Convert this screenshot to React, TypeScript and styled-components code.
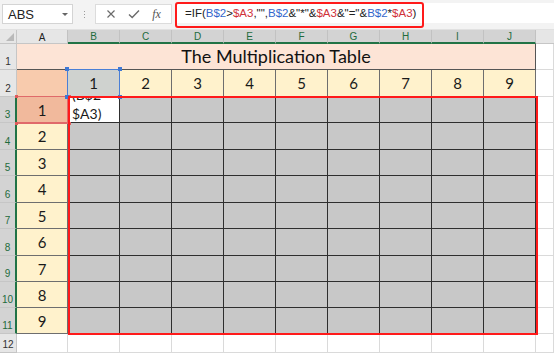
import React from "react";
import styled, { createGlobalStyle } from "styled-components";

const GlobalStyle = createGlobalStyle`
    html, body{
        margin: 0;
        padding: 0;
        background: #ffffff;
    }
    body{
        font-family: "Liberation Sans", Arial, sans-serif;
    }
`;

const Page = styled.div`
    width: 554px;
    height: 353px;
    overflow: hidden;
    background: #ffffff;
`;

/* TOOLBAR ---------------------------------------------------------------------------------- */
const Toolbar = styled.div`
    height: 30px;
    box-sizing: border-box;
    background: #f3f3f3;
    border-bottom: 1px solid #e1e1e1;
    display: flex;
    align-items: flex-start;
    padding: 3px 0 0 2px;
`;

const NameBox = styled.div`
    width: 71px;
    height: 20px;
    box-sizing: border-box;
    background: #fff;
    border: 1px solid #d4d4d4;
    display: flex;
    align-items: center;
    justify-content: space-between;
    padding: 0 4px 0 5px;
    font-size: 13px;
    color: #222;
    margin-top: 1px;
`;

const Caret = styled.span`
    width: 0;
    height: 0;
    border-left: 3px solid transparent;
    border-right: 3px solid transparent;
    border-top: 3px solid #666;
`;

const Grip = styled.div`
    width: 22px;
    height: 20px;
    display: flex;
    flex-direction: column;
    align-items: center;
    justify-content: center;
    gap: 2px;
    margin-top: 1px;
    span{
        width: 1px;
        height: 1px;
        background: #9a9a9a;
    }
`;

const IconBox = styled.div`
    width: 77px;
    height: 20px;
    box-sizing: border-box;
    background: #fff;
    border: 1px solid #dcdcdc;
    display: flex;
    align-items: center;
    justify-content: space-around;
    padding: 0 4px;
    margin-top: 1px;
    color: #6a6a6a;
`;

const Fx = styled.span`
    font-family: "Liberation Serif", serif;
    font-style: italic;
    font-size: 12px;
    color: #555;
`;

const FormulaBox = styled.div`
    flex: 1;
    height: 20px;
    margin-left: 4px;
    background: #fff;
    position: relative;
    display: flex;
    align-items: center;
    padding-left: 9px;
    font-size: 11.5px;
    color: #222;
    white-space: nowrap;
`;

const FormulaOutline = styled.div`
    position: absolute;
    left: -1px;
    top: -1px;
    width: 249px;
    height: 26px;
    box-sizing: border-box;
    border: 2px solid #ff1a1a;
    border-radius: 3px;
`;

const Ref = styled.span<{ $kind: "a" | "b" }>`
    color: ${p => (p.$kind === "a" ? "#3366cc" : "#d0323a")};
`;

/* SHEET ------------------------------------------------------------------------------------ */
const Sheet = styled.div`
    position: relative;
    display: grid;
    grid-template-columns: 17px 51px repeat(9, 52px) 1fr;
    grid-template-rows: 14px 26px 27px 26px 27px 26px 27px 26px 27px 26px 26px 26px 1fr;
    height: 323px;
`;

const Corner = styled.div`
    background: #e6e6e6;
    border-right: 1px solid #c6c6c6;
    border-bottom: 1px solid #c6c6c6;
    box-sizing: border-box;
    position: relative;
    &::after{
        content: "";
        position: absolute;
        right: 2px;
        bottom: 2px;
        border-left: 8px solid transparent;
        border-bottom: 8px solid #b9b9b9;
    }
`;

const ColHead = styled.div<{ $sel?: boolean; $edge?: boolean }>`
    box-sizing: border-box;
    background: ${p => (p.$sel ? "#d3d3d3" : "#e6e6e6")};
    color: ${p => (p.$sel ? "#1e6b3c" : "#222")};
    border-right: ${p => (p.$edge ? "none" : "1px solid #c2c2c2")};
    border-bottom: ${p => (p.$sel ? "2px solid #217346" : "1px solid #c6c6c6")};
    font-size: 10px;
    display: flex;
    align-items: center;
    justify-content: center;
    padding-top: 1px;
`;

const RowHead = styled.div<{ $sel?: boolean }>`
    box-sizing: border-box;
    background: ${p => (p.$sel ? "#d3d3d3" : "#e6e6e6")};
    color: ${p => (p.$sel ? "#1e6b3c" : "#333")};
    border-bottom: 1px solid #c6c6c6;
    border-right: ${p => (p.$sel ? "2px solid #217346" : "1px solid #c6c6c6")};
    font-size: 10px;
    display: flex;
    align-items: flex-end;
    justify-content: center;
    padding-bottom: 2px;
`;

const Title = styled.div`
    grid-column: 2 / span 10;
    box-sizing: border-box;
    background: #fde4d6;
    border-right: 1px solid #555;
    border-bottom: 1px solid #555;
    font-family: Lato, "Liberation Sans", sans-serif;
    font-size: 18px;
    color: #111;
    display: flex;
    align-items: flex-end;
    justify-content: center;
    padding-bottom: 2px;
`;

type Tone = "peach" | "salmon" | "yellow" | "picked" | "gray" | "white" | "blank";

const tones: Record<Tone, { bg: string; line: string }> = {
    peach: { bg: "#f8cbad", line: "#8c8c8c" },
    salmon: { bg: "#f1b99c", line: "#e06a6a" },
    yellow: { bg: "#fff2cc", line: "#6e6e6e" },
    picked: { bg: "#cfd2cf", line: "#6e6e6e" },
    gray: { bg: "#c8c8c8", line: "#2e2e2e" },
    white: { bg: "#ffffff", line: "#2e2e2e" },
    blank: { bg: "#ffffff", line: "#dadada" },
};

const Cell = styled.div<{ $tone: Tone }>`
    box-sizing: border-box;
    background: ${p => tones[p.$tone].bg};
    border-right: 1px solid ${p => tones[p.$tone].line};
    border-bottom: 1px solid ${p => tones[p.$tone].line};
    font-family: Lato, "Liberation Sans", sans-serif;
    font-size: 15px;
    color: #1a1a1a;
    display: flex;
    align-items: center;
    justify-content: center;
    overflow: hidden;
`;

// wrapped formula text, only its last lines fit in the cell
const WrapCell = styled(Cell)`
    flex-direction: column;
    align-items: flex-start;
    justify-content: flex-end;
    gap: 5px;
    padding: 0 0 1px 4px;
    font-size: 14px;
    line-height: 14px;
`;

const RangeOutline = styled.div`
    position: absolute;
    left: 68px;
    top: 66px;
    width: 470px;
    height: 239px;
    box-sizing: border-box;
    border: 2px solid #ff1a1a;
    pointer-events: none;
`;

const ActiveCell = styled.div`
    position: absolute;
    left: 67px;
    top: 39px;
    width: 53px;
    height: 28px;
    box-sizing: border-box;
    border: 1px solid #4a7fd6;
    span{
        position: absolute;
        width: 4px;
        height: 4px;
        background: #3f78d4;
    }
`;

const AnchorCell = styled.div`
    position: absolute;
    left: 17px;
    top: 66px;
    width: 52px;
    height: 28px;
    box-sizing: border-box;
    border-top: 1px solid #e06a6a;
    border-bottom: 1px solid #e06a6a;
    span{
        position: absolute;
        width: 3px;
        height: 3px;
        background: #e05a5a;
    }
`;

const columns = ["A", "B", "C", "D", "E", "F", "G", "H", "I", "J"];
const numbers = [1, 2, 3, 4, 5, 6, 7, 8, 9];

const App = () => {
    return (
        <Page>
            <GlobalStyle />
            <Toolbar>
                <NameBox>
                    ABS
                    <Caret />
                </NameBox>
                <Grip>
                    <span />
                    <span />
                    <span />
                </Grip>
                <IconBox>
                    <svg width="10" height="10" viewBox="0 0 10 10">
                        <path d="M1.5 1.5 L8.5 8.5 M8.5 1.5 L1.5 8.5" stroke="#6a6a6a" strokeWidth="1.2" />
                    </svg>
                    <svg width="12" height="10" viewBox="0 0 12 10">
                        <path d="M1 5.5 L4.2 8.5 L11 1.5" stroke="#6a6a6a" strokeWidth="1.4" fill="none" />
                    </svg>
                    <Fx>fx</Fx>
                </IconBox>
                <FormulaBox>
                    =IF(<Ref $kind="a">B$2</Ref>&gt;<Ref $kind="b">$A3</Ref>,"",<Ref $kind="a">B$2</Ref>&amp;"*"&amp;
                    <Ref $kind="b">$A3</Ref>&amp;"="&amp;<Ref $kind="a">B$2</Ref>*<Ref $kind="b">$A3</Ref>)
                    <FormulaOutline />
                </FormulaBox>
            </Toolbar>
            <Sheet>
                <Corner />
                {columns.map(c => (
                    <ColHead key={c} $sel={c !== "A"}>{c}</ColHead>
                ))}
                <ColHead $edge />

                <RowHead>1</RowHead>
                <Title>The Multiplication Table</Title>
                <Cell $tone="blank" />

                <RowHead>2</RowHead>
                <Cell $tone="peach" />
                {numbers.map(n => (
                    <Cell key={n} $tone={n === 1 ? "picked" : "yellow"}>{n}</Cell>
                ))}
                <Cell $tone="blank" />

                {numbers.map(r => (
                    <React.Fragment key={r}>
                        <RowHead $sel>{r + 2}</RowHead>
                        <Cell $tone={r === 1 ? "salmon" : "yellow"}>{r}</Cell>
                        {numbers.map(c =>
                            r === 1 && c === 1 ? (
                                <WrapCell key={c} $tone="white">
                                    <span>(B$2</span>
                                    <span>$A3)</span>
                                </WrapCell>
                            ) : (
                                <Cell key={c} $tone="gray" />
                            )
                        )}
                        <Cell $tone="blank" />
                    </React.Fragment>
                ))}

                <RowHead>12</RowHead>
                {columns.map(c => (
                    <Cell key={c} $tone="blank" />
                ))}
                <Cell $tone="blank" />

                <AnchorCell>
                    <span style={{ left: -2, top: -2 }} />
                    <span style={{ right: -2, top: -2 }} />
                    <span style={{ left: -2, bottom: -2 }} />
                    <span style={{ right: -2, bottom: -2 }} />
                </AnchorCell>
                <ActiveCell>
                    <span style={{ left: -3, top: -3 }} />
                    <span style={{ right: -3, top: -3 }} />
                    <span style={{ left: -3, bottom: -3 }} />
                    <span style={{ right: -3, bottom: -3 }} />
                </ActiveCell>
                <RangeOutline />
            </Sheet>
        </Page>
    );
};

export default App;
